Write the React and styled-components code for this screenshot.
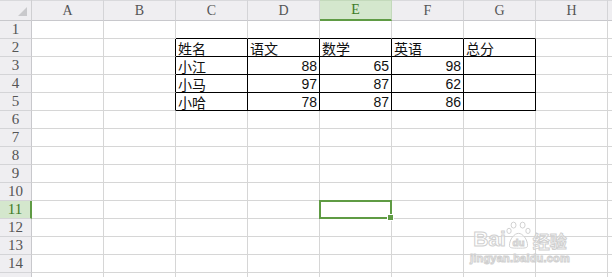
import React from "react";
import styled, { createGlobalStyle } from "styled-components";

const Global = createGlobalStyle`
  html, body { margin: 0; padding: 0; background: #fff; }
  body { width: 612px; height: 277px; overflow: hidden; }
`;

const COLS = ["A", "B", "C", "D", "E", "F", "G", "H"];
const ROWS = 14;

const data = {
  2: ["姓名", "语文", "数学", "英语", "总分"],
  3: ["小江", 88, 65, 98, ""],
  4: ["小马", 97, 87, 62, ""],
  5: ["小哈", 78, 87, 86, ""],
};

const GRID = "#d6d6d6";
const GREEN = "#5f9b44";
const MARK = "#d0d0d0";

const Sheet = styled.div`
  position: relative;
  display: grid;
  grid-template-columns: 32px repeat(8, 72px) 1fr;
  grid-template-rows: 21px repeat(${ROWS + 1}, 18px);
  width: 612px;
  height: 277px;
  overflow: hidden;
`;

const Corner = styled.div`
  background: #efeef1;
  border-right: 1px solid #cfcfd2;
  border-bottom: 1px solid #c8c8cc;
  box-shadow: inset 0 1px 0 #d9d9dc;
  position: relative;
  &::after {
    content: "";
    position: absolute;
    right: 4px;
    bottom: 4px;
    border-left: 9px solid transparent;
    border-bottom: 9px solid #c9c9cc;
  }
`;

const ColHead = styled.div`
  background: ${(p) => (p.$active ? "#d4e7cd" : "#efeef1")};
  box-shadow: inset 0 1px 0 ${(p) => (p.$active ? "#c3d9bb" : "#d9d9dc")};
  border-right: 1px solid ${(p) => (p.$active ? "#c3d9bb" : "#d4d4d7")};
  border-bottom: ${(p) => (p.$active ? `2px solid ${GREEN}` : "1px solid #c8c8cc")};
  color: ${(p) => (p.$active ? "#3d7a26" : "#555")};
  font-family: "Liberation Serif", "DejaVu Serif", serif;
  font-size: 14px;
  display: flex;
  align-items: center;
  justify-content: center;
  padding-top: 1px;
`;

const RowHead = styled.div`
  background: ${(p) => (p.$active ? "#d4e7cd" : "#efeef1")};
  border-right: ${(p) => (p.$active ? `2px solid ${GREEN}` : "1px solid #c8c8cc")};
  border-bottom: 1px solid #d4d4d7;
  color: ${(p) => (p.$active ? "#3d7a26" : "#555")};
  font-family: "Liberation Serif", "DejaVu Serif", serif;
  font-size: 15px;
  display: flex;
  align-items: center;
  justify-content: center;
`;

const Cell = styled.div`
  position: relative;
  border-right: 1px solid ${(p) => (p.$blackRight ? "#000" : GRID)};
  border-bottom: 1px solid ${(p) => (p.$blackBottom ? "#000" : GRID)};
  display: flex;
  align-items: center;
  justify-content: ${(p) => (p.$num ? "flex-end" : "flex-start")};
  padding: 0 2px;
  font-family: ${(p) =>
    p.$num
      ? '"Liberation Sans", Arial, sans-serif'
      : '"Noto Sans CJK SC", "Noto Sans", sans-serif'};
  font-size: ${(p) => (p.$num ? "14px" : "14px")};
  color: #111;
  white-space: nowrap;
  line-height: 16px;
`;

const Selection = styled.div`
  position: absolute;
  left: -1px;
  top: -1px;
  right: -1px;
  bottom: -1px;
  border: 2px solid ${GREEN};
  z-index: 2;
  &::after {
    content: "";
    position: absolute;
    right: -4px;
    bottom: -4px;
    width: 5px;
    height: 5px;
    background: ${GREEN};
    border: 1px solid #fff;
  }
`;

const Watermark = styled.div`
  position: absolute;
  left: 470px;
  top: 221px;
  z-index: 3;
  color: rgba(255, 255, 255, 0.5);
  -webkit-text-stroke: 1px ${MARK};
  pointer-events: none;
  display: flex;
  flex-direction: column;
  align-items: center;
`;

const Brand = styled.div`
  display: flex;
  align-items: flex-end;
  font-family: "Liberation Sans", Arial, sans-serif;
  font-weight: 700;
  font-size: 21px;
  line-height: 1;
`;

const BrandCn = styled.span`
  font-family: "Noto Sans CJK SC", sans-serif;
  font-size: 17px;
  margin-left: 2px;
`;

const Url = styled.div`
  font-family: "Liberation Sans", Arial, sans-serif;
  font-weight: 700;
  font-size: 11px;
  margin-top: 3px;
  letter-spacing: 0.2px;
`;

const Paw = () => (
  <svg width="25" height="28" viewBox="0 0 30 34" fill="rgba(255,255,255,0.5)" stroke={MARK} strokeWidth="1.2">
    <ellipse cx="9" cy="5" rx="3" ry="3.6" />
    <ellipse cx="20" cy="5" rx="3" ry="3.6" />
    <ellipse cx="3.5" cy="12" rx="2.6" ry="3.2" />
    <ellipse cx="26.5" cy="12" rx="2.6" ry="3.2" />
    <path d="M4 30 C4 22 10 15 15 15 C20 15 26 22 26 30 C26 33 22 33 15 33 C8 33 4 33 4 30 Z" />
    <text x="15" y="30" textAnchor="middle" fontFamily="Liberation Sans, Arial, sans-serif" fontWeight="700" fontSize="12" stroke={MARK} fill="#fff">du</text>
  </svg>
);

export default function App() {
  const cells = [];
  cells.push(<Corner key="corner" />);
  COLS.forEach((c) =>
    cells.push(
      <ColHead key={"h" + c} $active={c === "E"}>
        {c}
      </ColHead>
    )
  );
  cells.push(<ColHead key="hx" />);

  for (let r = 1; r <= ROWS + 1; r++) {
    cells.push(
      <RowHead key={"r" + r} $active={r === 11}>
        {r <= ROWS ? r : ""}
      </RowHead>
    );
    for (let ci = 0; ci < 9; ci++) {
      const inTableRow = r >= 2 && r <= 5;
      const blackRight = inTableRow && ci >= 1 && ci <= 6;
      const blackBottom = r >= 1 && r <= 5 && ci >= 2 && ci <= 6;
      let value = "";
      let num = false;
      if (data[r] && ci >= 2 && ci <= 6) {
        value = data[r][ci - 2];
        num = typeof value === "number";
      }
      cells.push(
        <Cell
          key={r + "-" + ci}
          $blackRight={blackRight}
          $blackBottom={blackBottom}
          $num={num}
        >
          {value}
          {r === 11 && ci === 4 && <Selection />}
        </Cell>
      );
    }
  }

  return (
    <>
      <Global />
      <Sheet>
        {cells}
        <Watermark>
          <Brand>
            Bai
            <Paw />
            <BrandCn>经验</BrandCn>
          </Brand>
          <Url>jingyan.baidu.com</Url>
        </Watermark>
      </Sheet>
    </>
  );
}
